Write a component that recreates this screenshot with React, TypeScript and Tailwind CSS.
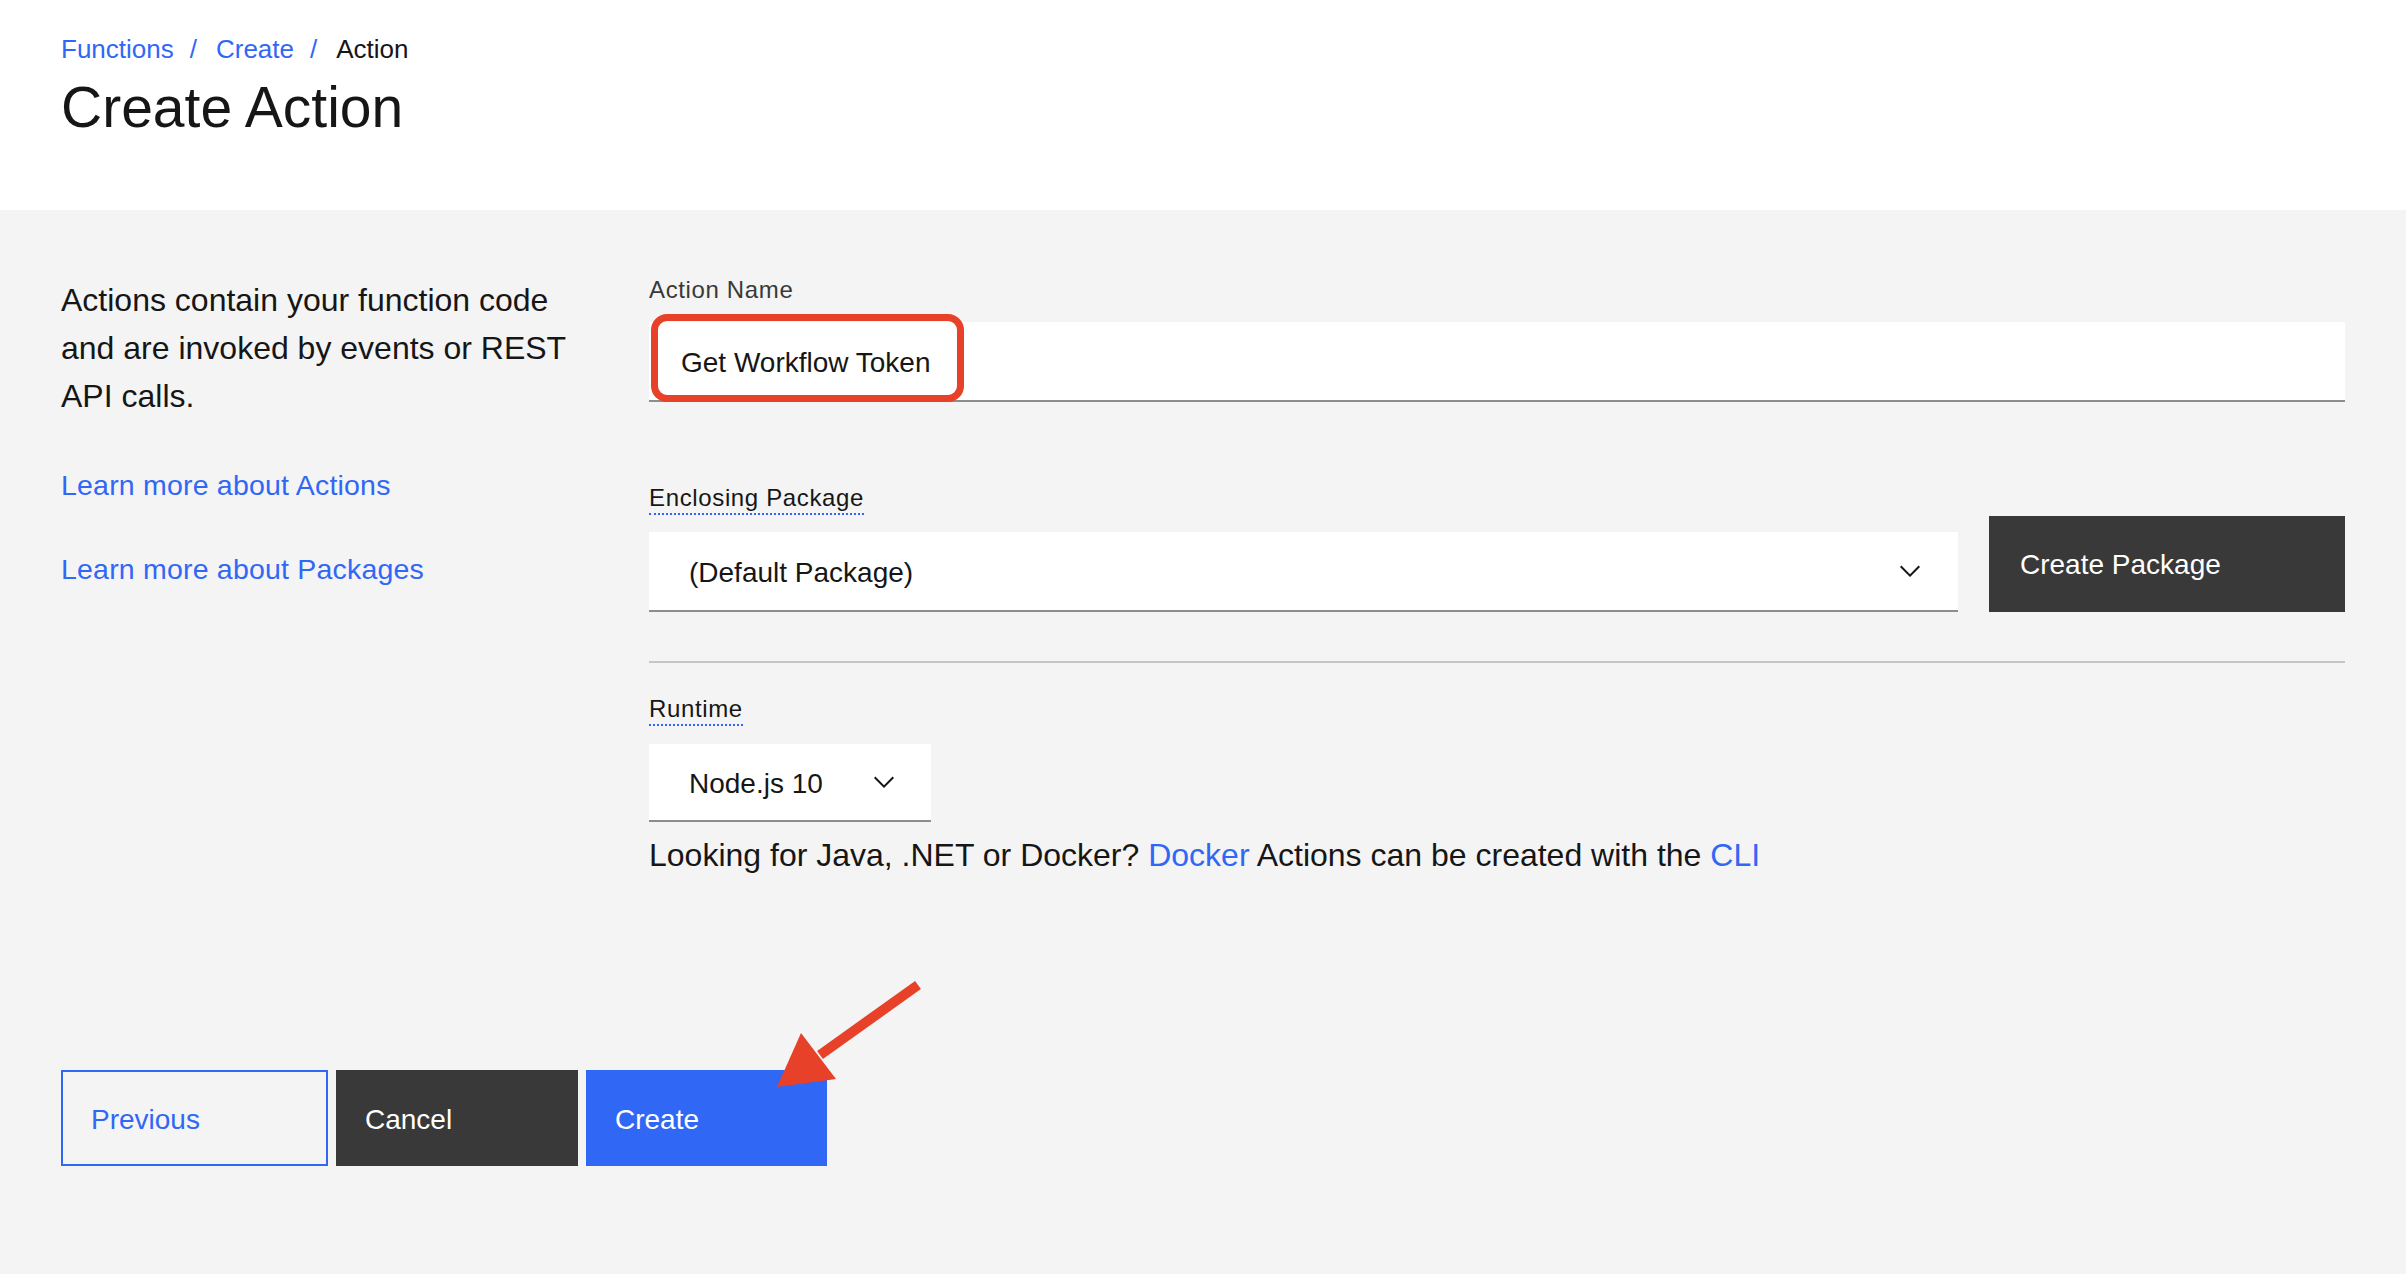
import React from "react";

function ChevronDown() {
  return (
    <svg width="32" height="32" viewBox="0 0 32 32" fill="#161616" aria-hidden="true">
      <path d="M16 22L6 12l1.4-1.4 8.6 8.6 8.6-8.6L26 12z" />
    </svg>
  );
}

function Breadcrumb() {
  return (
    <nav className="flex items-center text-[26px] leading-[36px]">
      <a className="text-[#3167f5]">Functions</a>
      <span className="ml-[16px] mr-[19px] text-[#3167f5]">/</span>
      <a className="text-[#3167f5]">Create</a>
      <span className="ml-[16px] mr-[19px] text-[#3167f5]">/</span>
      <span className="text-[#161616]">Action</span>
    </nav>
  );
}

export default function App() {
  return (
    <div className="relative min-h-screen w-full bg-[#f4f4f4] font-['Liberation_Sans',Arial,sans-serif] text-[#161616]">
      {/* header */}
      <header className="h-[210px] bg-white px-[61px] pt-[31px]">
        <Breadcrumb />
        <h1 className="mt-[8px] text-[57px] leading-[64px] font-normal">Create Action</h1>
      </header>

      {/* body */}
      <div className="flex px-[61px] pt-16">
        <div className="w-[588px] shrink-0">
          <p className="w-[520px] pt-[2px] text-[32px] leading-[48px]">
            Actions contain your function code and are invoked by events or REST API calls.
          </p>
          <a className="mt-[45px] block text-[28.5px] tracking-[0.2px] leading-[40px] text-[#3167f5]">
            Learn more about Actions
          </a>
          <a className="mt-[44px] block text-[28.5px] tracking-[0.2px] leading-[40px] text-[#3167f5]">
            Learn more about Packages
          </a>
        </div>

        <div className="flex-1">
          <label className="block text-[24px] leading-[32px] tracking-[0.64px] text-[#393939]">
            Action Name
          </label>
          <div className="relative mt-4 flex h-[80px] items-center border-b-2 border-[#8d8d8d] bg-white pl-8 pt-[3px] text-[28px]">
            Get Workflow Token
            <div className="pointer-events-none absolute left-[2px] top-[-8px] h-[88px] w-[313px] rounded-[16px] border-[7px] border-[#e8412a]" />
          </div>

          <div className="mt-[81px] flex items-end gap-[31px]">
            <div className="flex-1">
              <span className="inline-block border-b-2 border-dotted border-[#3167f5] text-[24px] leading-[30px] tracking-[0.64px]">
                Enclosing Package
              </span>
              <div className="mt-[17px] flex h-[80px] items-center justify-between border-b-2 border-[#8d8d8d] bg-white pl-10 pr-8 text-[28px]">
                <span className="pt-[3px]">(Default Package)</span>
                <ChevronDown />
              </div>
            </div>
            <button className="h-[96px] w-[356px] bg-[#393939] pl-[31px] pt-[2px] text-left text-[28px] text-white">
              Create Package
            </button>
          </div>

          <div className="mt-[49px] h-[2px] bg-[#c6c6c6]" />

          <span className="mt-[31px] inline-block border-b-2 border-dotted border-[#3167f5] text-[24px] leading-[30px] tracking-[0.64px]">
            Runtime
          </span>
          <div className="mt-[18px] flex h-[78px] w-[282px] items-center justify-between border-b-2 border-[#8d8d8d] bg-white pl-10 pr-[31px] text-[28px]">
            <span className="pt-[3px]">Node.js 10</span>
            <ChevronDown />
          </div>
          <p className="mt-[9px] text-[32px] leading-[48px]">
            Looking for Java, .NET or Docker? <a className="text-[#3167f5]">Docker</a> Actions can be created with the{" "}
            <a className="text-[#3167f5]">CLI</a>
          </p>
        </div>
      </div>

      {/* footer buttons */}
      <div className="mt-[191px] flex gap-2 px-[61px] pb-[108px]">
        <button className="h-[96px] w-[267px] border-2 border-[#3167f5] pl-[28px] pt-[3px] text-left text-[28px] text-[#3167f5]">
          Previous
        </button>
        <button className="h-[96px] w-[242px] bg-[#393939] pl-[29px] pt-[3px] text-left text-[28px] text-white">
          Cancel
        </button>
        <button className="h-[96px] w-[241px] bg-[#3167f5] pl-[29px] pt-[3px] text-left text-[28px] text-white">
          Create
        </button>
      </div>

      {/* annotation arrow */}
      <svg
        className="pointer-events-none absolute left-[770px] top-[975px]"
        width="160"
        height="120"
        viewBox="0 0 160 120"
      >
        <line x1="148" y1="10" x2="50" y2="80" stroke="#e8412a" strokeWidth="10" />
        <polygon points="7,112 31,58 66,104" fill="#e8412a" />
      </svg>
    </div>
  );
}
